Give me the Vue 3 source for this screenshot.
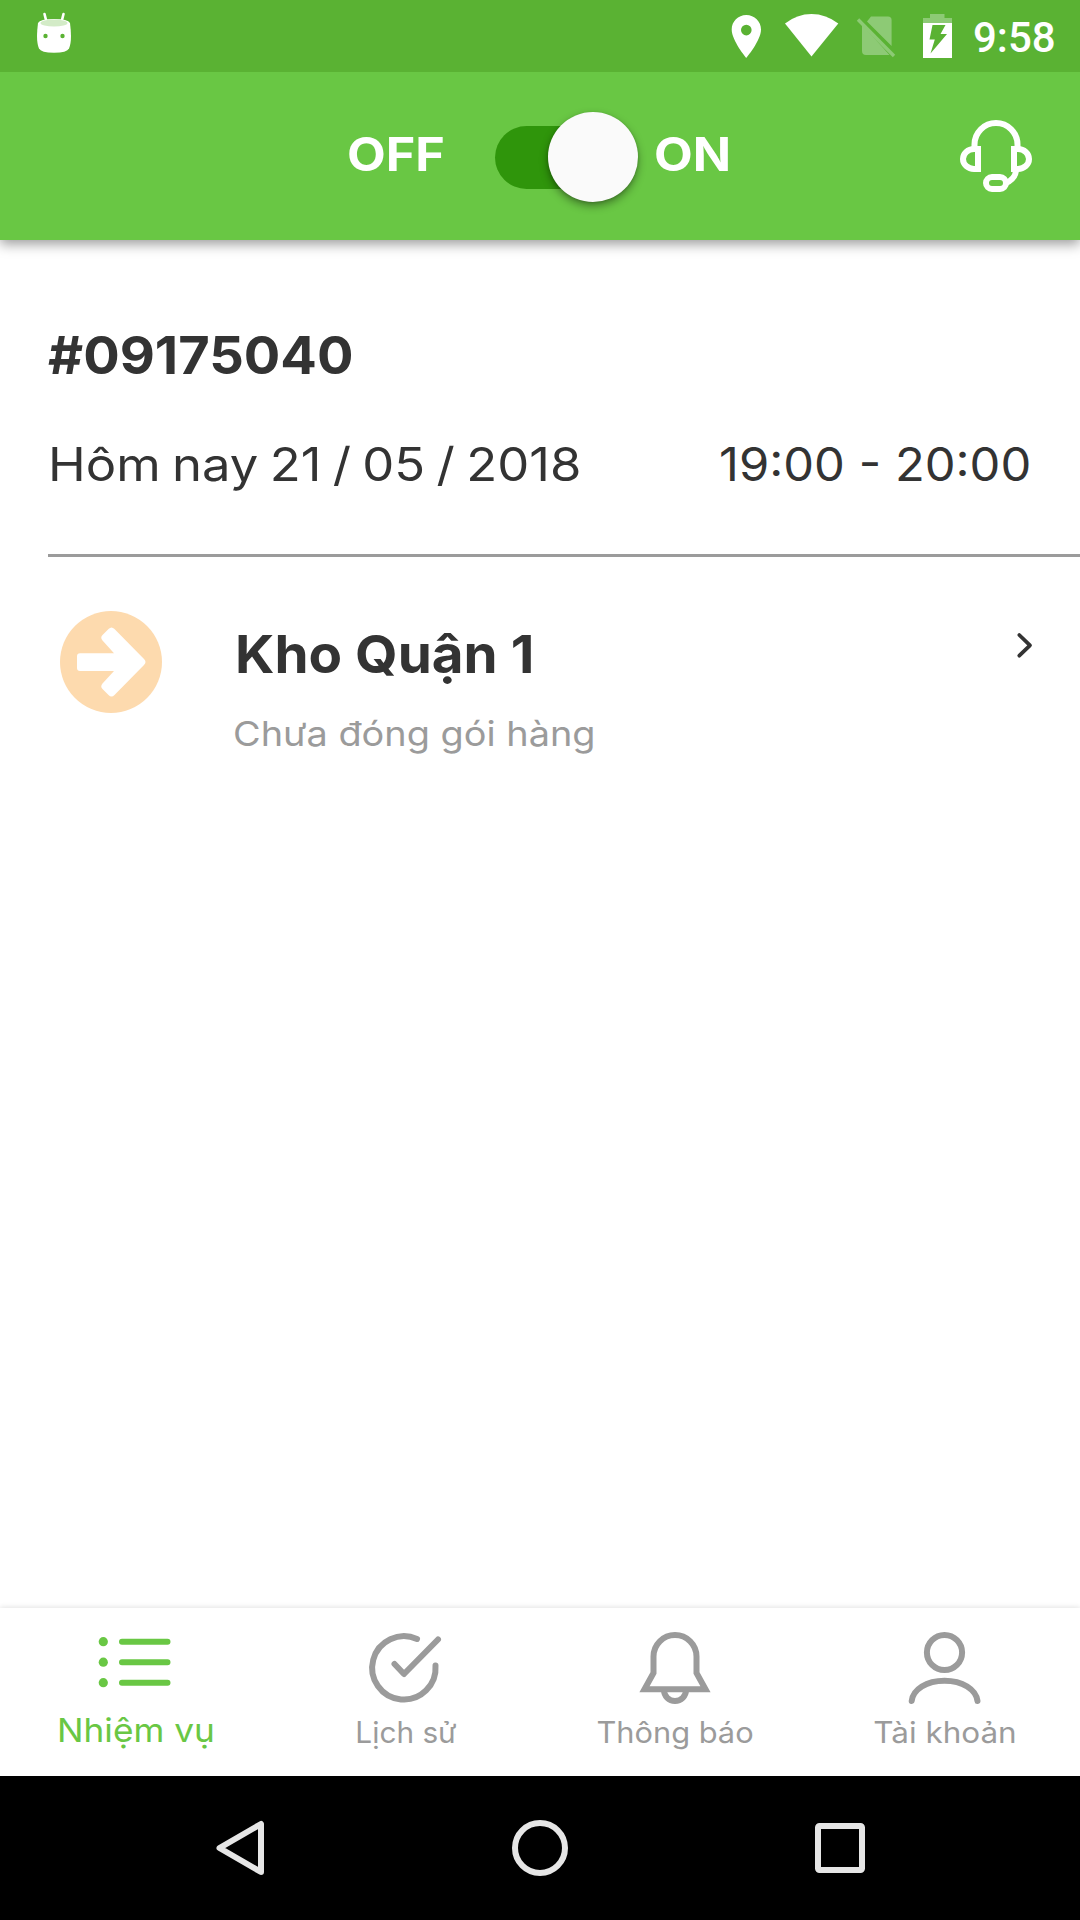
<script setup>
const order = {
  code: '#09175040',
  day: 'Hôm nay 21 / 05 / 2018',
  slot: '19:00 - 20:00',
  place: 'Kho Quận 1',
  state: 'Chưa đóng gói hàng'
}
const tabs = [
  { id: 'tasks', label: 'Nhiệm vụ' },
  { id: 'history', label: 'Lịch sử' },
  { id: 'alerts', label: 'Thông báo' },
  { id: 'account', label: 'Tài khoản' }
]
</script>

<template>
  <div class="screen">
    <div class="status">
      <svg class="droid" width="40" height="48" viewBox="0 0 40 48">
        <path d="M10.500 9L12.500 17M29.500 9L27.500 17" stroke="#fff" stroke-width="2.600" stroke-linecap="round" />
        <path d="M4 18Q3 26 3 31Q3 39 5 43.500Q7 47.700 20 47.700Q33 47.700 35 43.500Q37 39 37 31Q37 26 36 18Q34 14 20 14Q6 14 4 18Z" fill="#fff" />
        <ellipse cx="20" cy="18" rx="13.500" ry="3.600" fill="#d3ebc7" />
        <circle cx="11.500" cy="31" r="2.200" fill="#5ab233" />
        <circle cx="28.500" cy="31" r="2.200" fill="#5ab233" />
      </svg>
      <svg class="signals" width="226" height="50" viewBox="730 10 226 50">
        <path fill="#fff" fill-rule="evenodd" d="M746.300 15C738 15 731.700 21.500 731.700 29.500C731.700 40.500 746.300 58 746.300 58C746.300 58 761 40.500 761 29.500C761 21.500 754.500 15 746.300 15ZM746.300 24.800A5.300 5.300 0 1 1 746.300 35.400A5.300 5.300 0 1 1 746.300 24.800Z" />
        <path fill="#fff" d="M785 23.500Q797 14 811.500 14Q826 14 838.300 23.500L811.500 56.500Z" />
        <path fill="#8dca75" d="M871 16.500H888Q891.600 16.500 891.600 20V46L867 21.500ZM862 24.500L889.500 55H866Q862 55 862 51Z" />
        <path d="M858 19.500L894 56" stroke="#8dca75" stroke-width="3.400" />
        <path fill="#8dca75" d="M930 14H944.500V18H952V23.500H923V18H930Z" />
        <path fill="#fff" fill-rule="evenodd" d="M923 23H952V58H923ZM932.500 25H945.500L940.500 34H947L930.500 53.500L934.800 39.500H929.500Z" />
      </svg>
      <span class="clock">9:58</span>
    </div>

    <header class="bar">
      <span class="mode off">OFF</span>
      <div class="switch"><div class="thumb"></div></div>
      <span class="mode on">ON</span>
      <svg class="headset" width="72" height="72" viewBox="0 0 72 72" fill="none" stroke="#fff" stroke-width="6">
        <path d="M14.500 27V24.500A21.500 21.500 0 0 1 57.500 24.500V27" />
        <path d="M18 29H14A11 10 0 0 0 14 49H18Z" />
        <path d="M54 29H58A11 10 0 0 1 58 49H54Z" />
        <path d="M56 51Q55 59 46 63" />
        <rect x="26" y="57" width="20" height="12" rx="6" />
      </svg>
    </header>

    <main class="content">
      <h1 class="code">{{ order.code }}</h1>
      <div class="when">
        <span class="day">{{ order.day }}</span>
        <span class="slot">{{ order.slot }}</span>
      </div>
      <div class="rule"></div>
      <div class="stop">
        <svg class="badge" width="102" height="102" viewBox="0 0 102 102">
          <circle cx="51" cy="51" r="51" fill="#fddaae" />
          <path d="M20 42.300H54L42.500 29.500Q40 26.500 42.500 24L48.500 18Q51.500 15 54.500 18L84 48Q87 51 84 54L54.500 84Q51.500 87 48.500 84L42.500 78Q40 75.500 42.500 72.500L54 60H20Q17 60 17 57V45.300Q17 42.300 20 42.300Z" fill="#fff" />
        </svg>
        <div class="info">
          <div class="place">{{ order.place }}</div>
          <div class="state">{{ order.state }}</div>
        </div>
        <svg class="chevron" width="18" height="27" viewBox="0 0 18 27">
          <path d="M3.300 3L14 13.300L3.300 23.700" fill="none" stroke="#333" stroke-width="3.800" stroke-linecap="round" stroke-linejoin="round" />
        </svg>
      </div>
    </main>

    <nav class="tabs">
      <div v-for="t in tabs" :key="t.id" class="tab" :class="t.id">
        <svg width="74" height="74" viewBox="0 0 74 74" fill="none" stroke="currentColor" stroke-width="6" stroke-linecap="round">
          <g v-if="t.id === 'tasks'">
            <path d="M24 11.700H69.500M24 32.200H69.500M24 52.700H69.500" />
            <g fill="currentColor" stroke="none">
              <circle cx="5.300" cy="11.700" r="4.600" /><circle cx="5.300" cy="32.200" r="4.600" /><circle cx="5.300" cy="52.700" r="4.600" />
            </g>
          </g>
          <g v-else-if="t.id === 'history'">
            <path d="M49 9A31.700 31.700 0 1 0 67.500 35.500" />
            <path d="M26.500 34L36 44L70 9.500" stroke-linejoin="round" />
          </g>
          <g v-else-if="t.id === 'alerts'" stroke-linecap="butt">
            <path d="M6.500 59.200H67.500L58.500 43V26.500A21.500 21.500 0 0 0 15.500 26.500V43Z" />
            <path d="M26 60A11 11 0 0 0 48 60" />
          </g>
          <g v-else>
            <circle cx="36.500" cy="22.500" r="17.600" />
            <path d="M3.700 71C5 59.500 18.500 50.700 36.500 50.700C54.500 50.700 68 59.500 69.500 71" />
          </g>
        </svg>
        <span class="label">{{ t.label }}</span>
      </div>
    </nav>

    <div class="sysnav">
      <svg width="50" height="56" viewBox="0 0 50 56"><path d="M46 4V52L4.500 28Z" fill="none" stroke="#e6e6e6" stroke-width="6" stroke-linejoin="round" /></svg>
      <svg width="56" height="56" viewBox="0 0 56 56"><circle cx="28" cy="28" r="25" fill="none" stroke="#e6e6e6" stroke-width="6" /></svg>
      <svg width="50" height="50" viewBox="0 0 50 50"><rect x="3" y="3" width="44" height="44" rx="1.500" fill="none" stroke="#e6e6e6" stroke-width="6" /></svg>
    </div>
  </div>
</template>

<style scoped>
.screen {
  display: flex;
  flex-direction: column;
  width: 1080px;
  height: 1920px;
  overflow: hidden;
  background: #fff;
  color: #333;
  font-family: Inter, "Noto Sans", sans-serif;
  white-space: nowrap;
}
svg { display: block; flex: none; overflow: visible; }
.status { display: flex; height: 72px; background: #5ab233; }
.droid { margin: 5px 0 0 34px; }
.signals { margin: 10px 0 0 656px; }
.clock { margin-left: 17px; color: #fff; font: 500 42px/75px Roboto, sans-serif; }
.bar {
  display: flex;
  height: 168px;
  background: #69c744;
  box-shadow: 0 4px 12px rgba(0, 0, 0, .4);
  clip-path: inset(0 0 -30px 0);
}
.mode, .code, .day, .slot, .place, .state { transform-origin: 0 50%; }
.mode { color: #fff; font-size: 46.2px; font-weight: 650; line-height: 164px; }
.off { width: 148px; margin-left: 347px; transform: scaleX(1.09); }
.on { width: 306px; margin-left: 16px; transform: scaleX(1.09); }
.switch { width: 143px; height: 63px; margin-top: 54px; display: flex; background: linear-gradient(90deg, #2f950b 110px, transparent 110px); border-radius: 31.5px 0 0 31.5px; }
.thumb { width: 90px; height: 90px; margin: -12.500px 0 0 53px; border-radius: 50%; background: #fafafa; box-shadow: 0 4px 8px rgba(0, 0, 0, .38), 0 1px 3px rgba(0, 0, 0, .15); }
.switch .thumb { margin-top: -14.500px; }
.headset { margin-top: 48px; }
.content { flex: 1; padding-top: 85px; }
.code { margin: 0 0 0 48px; font-size: 52.2px; font-weight: 650; line-height: 60px; transform: scaleX(1.038); }
.when { display: flex; margin: 49px 0 0 48px; font-size: 46.2px; line-height: 60px; }
.day { width: 671px; transform: scaleX(1.1); word-spacing: -2.7px; }
.slot { transform: scaleX(1.058); }
.rule { height: 3px; margin: 60px 0 0 48px; background: #9b9b9b; }
.stop { display: flex; padding: 54px 46px 0 60px; }
.info { margin: 13px 0 0 71px; width: 783px; }
.place { margin-left: 2px; font-size: 52.2px; font-weight: 650; line-height: 60px; transform: scaleX(1.05); }
.state { margin-top: 29px; font-size: 34.6px; line-height: 41px; color: #9b9b9b; transform: scaleX(1.095); }
.chevron { margin: 21px 0 0 1px; }
.tabs { display: flex; height: 168px; background: #fff; box-shadow: 0 -1px 5px rgba(0, 0, 0, .11); color: #9b9b9b; }
.tab { flex: 1; display: flex; flex-direction: column; align-items: center; padding-top: 22px; }
.label { font-size: 29.4px; line-height: 36px; margin-top: 11px; }
.tasks { color: #69c744; }
.tasks .label { font-size: 33px; line-height: 40px; margin-top: 6px; transform: translateX(1px) scaleX(1.068); }
.history .label { transform: translateX(1px) scaleX(1.013); }
.alerts .label { transform: scaleX(1.048); }
.account .label { transform: scaleX(1.07); }
.sysnav { display: flex; align-items: center; justify-content: space-between; height: 144px; padding: 0 215px; background: #000; }
</style>
